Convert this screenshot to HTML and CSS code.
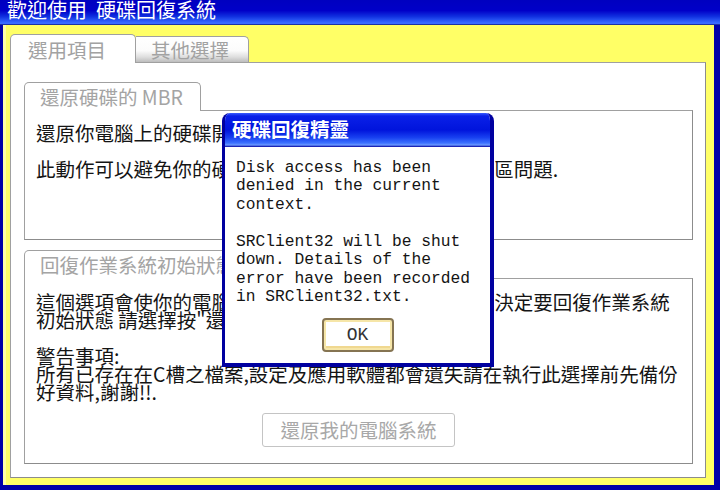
FILE: index.html
```html
<!DOCTYPE html>
<html lang="zh-Hant">
<head>
<meta charset="utf-8">
<title>歡迎使用 硬碟回復系統</title>
<link rel="stylesheet" href="styles.css">
</head>
<body>
<div class="window">
  <div class="titlebar">歡迎使用  硬碟回復系統</div>
  <div class="client">
    <div class="tabs">
      <div class="tab tab-active">選用項目</div>
      <div class="tab tab-other">其他選擇</div>
    </div>
    <div class="panel">
      <section class="group group-mbr">
        <div class="legend legend-mbr">還原硬碟的 MBR</div>
        <div class="box box-mbr">
          <div class="line">還原你電腦上的硬碟開機磁區(MBR)</div>
          <div class="line"></div>
          <div class="line">此動作可以避免你的硬碟因病毒或誤操作, 造成開機磁區問題.</div>
        </div>
      </section>
      <section class="group group-os">
        <div class="legend legend-os">回復作業系統初始狀態</div>
        <div class="box box-os">
          <div class="line">這個選項會使你的電腦回復到出廠時的預設狀態, 若你決定要回復作業系統</div>
          <div class="line">初始狀態 請選擇按"還原我的電腦系統"</div>
          <div class="line"></div>
          <div class="line">警告事項:</div>
          <div class="line">所有已存在在C槽之檔案,設定及應用軟體都會遺失請在執行此選擇前先備份</div>
          <div class="line">好資料,謝謝!!.</div>
          <div class="actions"><button class="restore" type="button">還原我的電腦系統</button></div>
        </div>
      </section>
    </div>
  </div>
  <div class="dialog">
    <div class="dialog-title">硬碟回復精靈</div>
    <div class="dialog-body">
      <p class="msg">Disk access has been<br>denied in the current<br>context.<br><br>SRClient32 will be shut<br>down. Details of the<br>error have been recorded<br>in SRClient32.txt.</p>
      <div class="dialog-actions"><button class="ok" type="button">OK</button></div>
    </div>
  </div>
</div>
</body>
</html>
```
FILE: styles.css
```css
html, body {
  margin: 0;
  padding: 0;
  background: #0000a8;
}

body {
  font-family: "Noto Sans CJK TC", "Noto Sans CJK SC", sans-serif;
  color: #141414;
}

.window {
  position: relative;
  width: 720px;
  height: 490px;
  background: #0000a8;
  display: flex;
  flex-direction: column;
  overflow: hidden;
}

.titlebar {
  height: 25px;
  box-sizing: border-box;
  padding-left: 7px;
  font-size: 20px;
  line-height: 20px;
  color: #ffffff;
  white-space: pre;
  background: linear-gradient(#0000c0 0%, #0000c8 42%, #1030e0 66%, #3468ff 90%, #3a6cff 94%, #0a1478 100%);
}

.client {
  flex: 1;
  margin: 0 6px 5px 3px;
  padding: 9px 8px 7px 7px;
  background: #ffff66;
  display: flex;
  flex-direction: column;
  box-shadow: inset 3px 0 0 #ffffa8;
}

.tabs {
  display: flex;
  align-items: flex-end;
  height: 28px;
}

.tab {
  box-sizing: border-box;
  font-size: 19.5px;
  color: #a2a2a2;
  border: 1px solid #a0a0a0;
  border-bottom: none;
}

.tab-active {
  position: relative;
  z-index: 1;
  width: 126px;
  height: 29px;
  margin-bottom: -1px;
  padding-left: 17px;
  line-height: 29px;
  background: #ffffff;
  border-radius: 5px 5px 0 0;
}

.tab-other {
  width: 113px;
  height: 26px;
  padding-left: 15px;
  line-height: 26px;
  border-left: none;
  border-radius: 0 5px 0 0;
  background: linear-gradient(#ffffff 0%, #fbfbfb 55%, #dedede 80%, #bdbdbd 100%);
}

.panel {
  flex: 1;
  display: flex;
  flex-direction: column;
  background: #ffffff;
  border: 1px solid #a0a0a0;
  border-right-color: #8c8c8c;
  border-bottom-color: #8c8c8c;
  padding: 19px 12px 13px 13px;
}

.group {
  display: flex;
  flex-direction: column;
}

.group-os {
  flex: 1;
  margin-top: 10px;
}

.legend {
  position: relative;
  z-index: 1;
  box-sizing: border-box;
  height: 29px;
  margin-bottom: -1px;
  padding-left: 15px;
  font-size: 19.5px;
  line-height: 28px;
  color: #a4a4a4;
  background: #ffffff;
  border: 1px solid #a0a0a0;
  border-bottom: none;
  border-radius: 5px 5px 0 0;
}

.legend-mbr {
  width: 177px;
}

.legend-os {
  width: 232px;
}

.box {
  box-sizing: border-box;
  border: 1px solid #a0a0a0;
  border-right-color: #8c8c8c;
  border-bottom-color: #8c8c8c;
  padding: 13px 11px 0 11px;
  font-size: 19.5px;
}

.box-mbr {
  height: 130px;
}

.box-os {
  flex: 1;
  padding-top: 14px;
}

.line {
  height: 18px;
  line-height: 18px;
  white-space: nowrap;
  color: #141414;
}

.actions {
  display: flex;
  justify-content: center;
  margin-top: 12px;
}

.restore {
  width: 193px;
  height: 34px;
  padding: 0;
  font-family: inherit;
  font-size: 19.5px;
  line-height: 32px;
  color: #a8a8a8;
  background: #ffffff;
  border: 1px solid #c4c4c4;
  border-radius: 3px;
}

.dialog {
  position: absolute;
  left: 222px;
  top: 113px;
  z-index: 5;
  width: 272px;
  height: 254px;
  box-sizing: border-box;
  background: #ffffff;
  border: 3px solid #0000a0;
  border-top: none;
  border-right-width: 4px;
  border-bottom-width: 4px;
  border-radius: 8px 8px 0 0;
  display: flex;
  flex-direction: column;
  overflow: hidden;
}

.dialog-title {
  height: 34px;
  box-sizing: border-box;
  padding-left: 7px;
  font-size: 19.5px;
  font-weight: bold;
  line-height: 32px;
  color: #ffffff;
  background: linear-gradient(#3a5cff 0px, #0a20e8 3px, #0014dc 50%, #1840f0 72%, #3a70ff 88%, #6a98ff 94%, #0000a0 100%);
}

.dialog-body {
  padding: 11.75px 0 0 11px;
}

.msg {
  margin: 0;
  font-family: "Liberation Mono", "DejaVu Sans Mono", monospace;
  font-size: 16.25px;
  line-height: 18.5px;
  color: #141414;
  white-space: nowrap;
}

.dialog-actions {
  display: flex;
  justify-content: center;
  margin: 11px 11px 0 0;
}

.ok {
  width: 72px;
  height: 34px;
  padding: 0;
  font-family: "Liberation Mono", "DejaVu Sans Mono", monospace;
  font-size: 18px;
  font-weight: normal;
  color: #333333;
  background: #ffffff;
  border: 2px solid #857452;
  border-radius: 4px;
  box-shadow: inset 0 0 0 2px #f6e6a8, inset 0 -2px 0 2px #f0d890;
}
```
